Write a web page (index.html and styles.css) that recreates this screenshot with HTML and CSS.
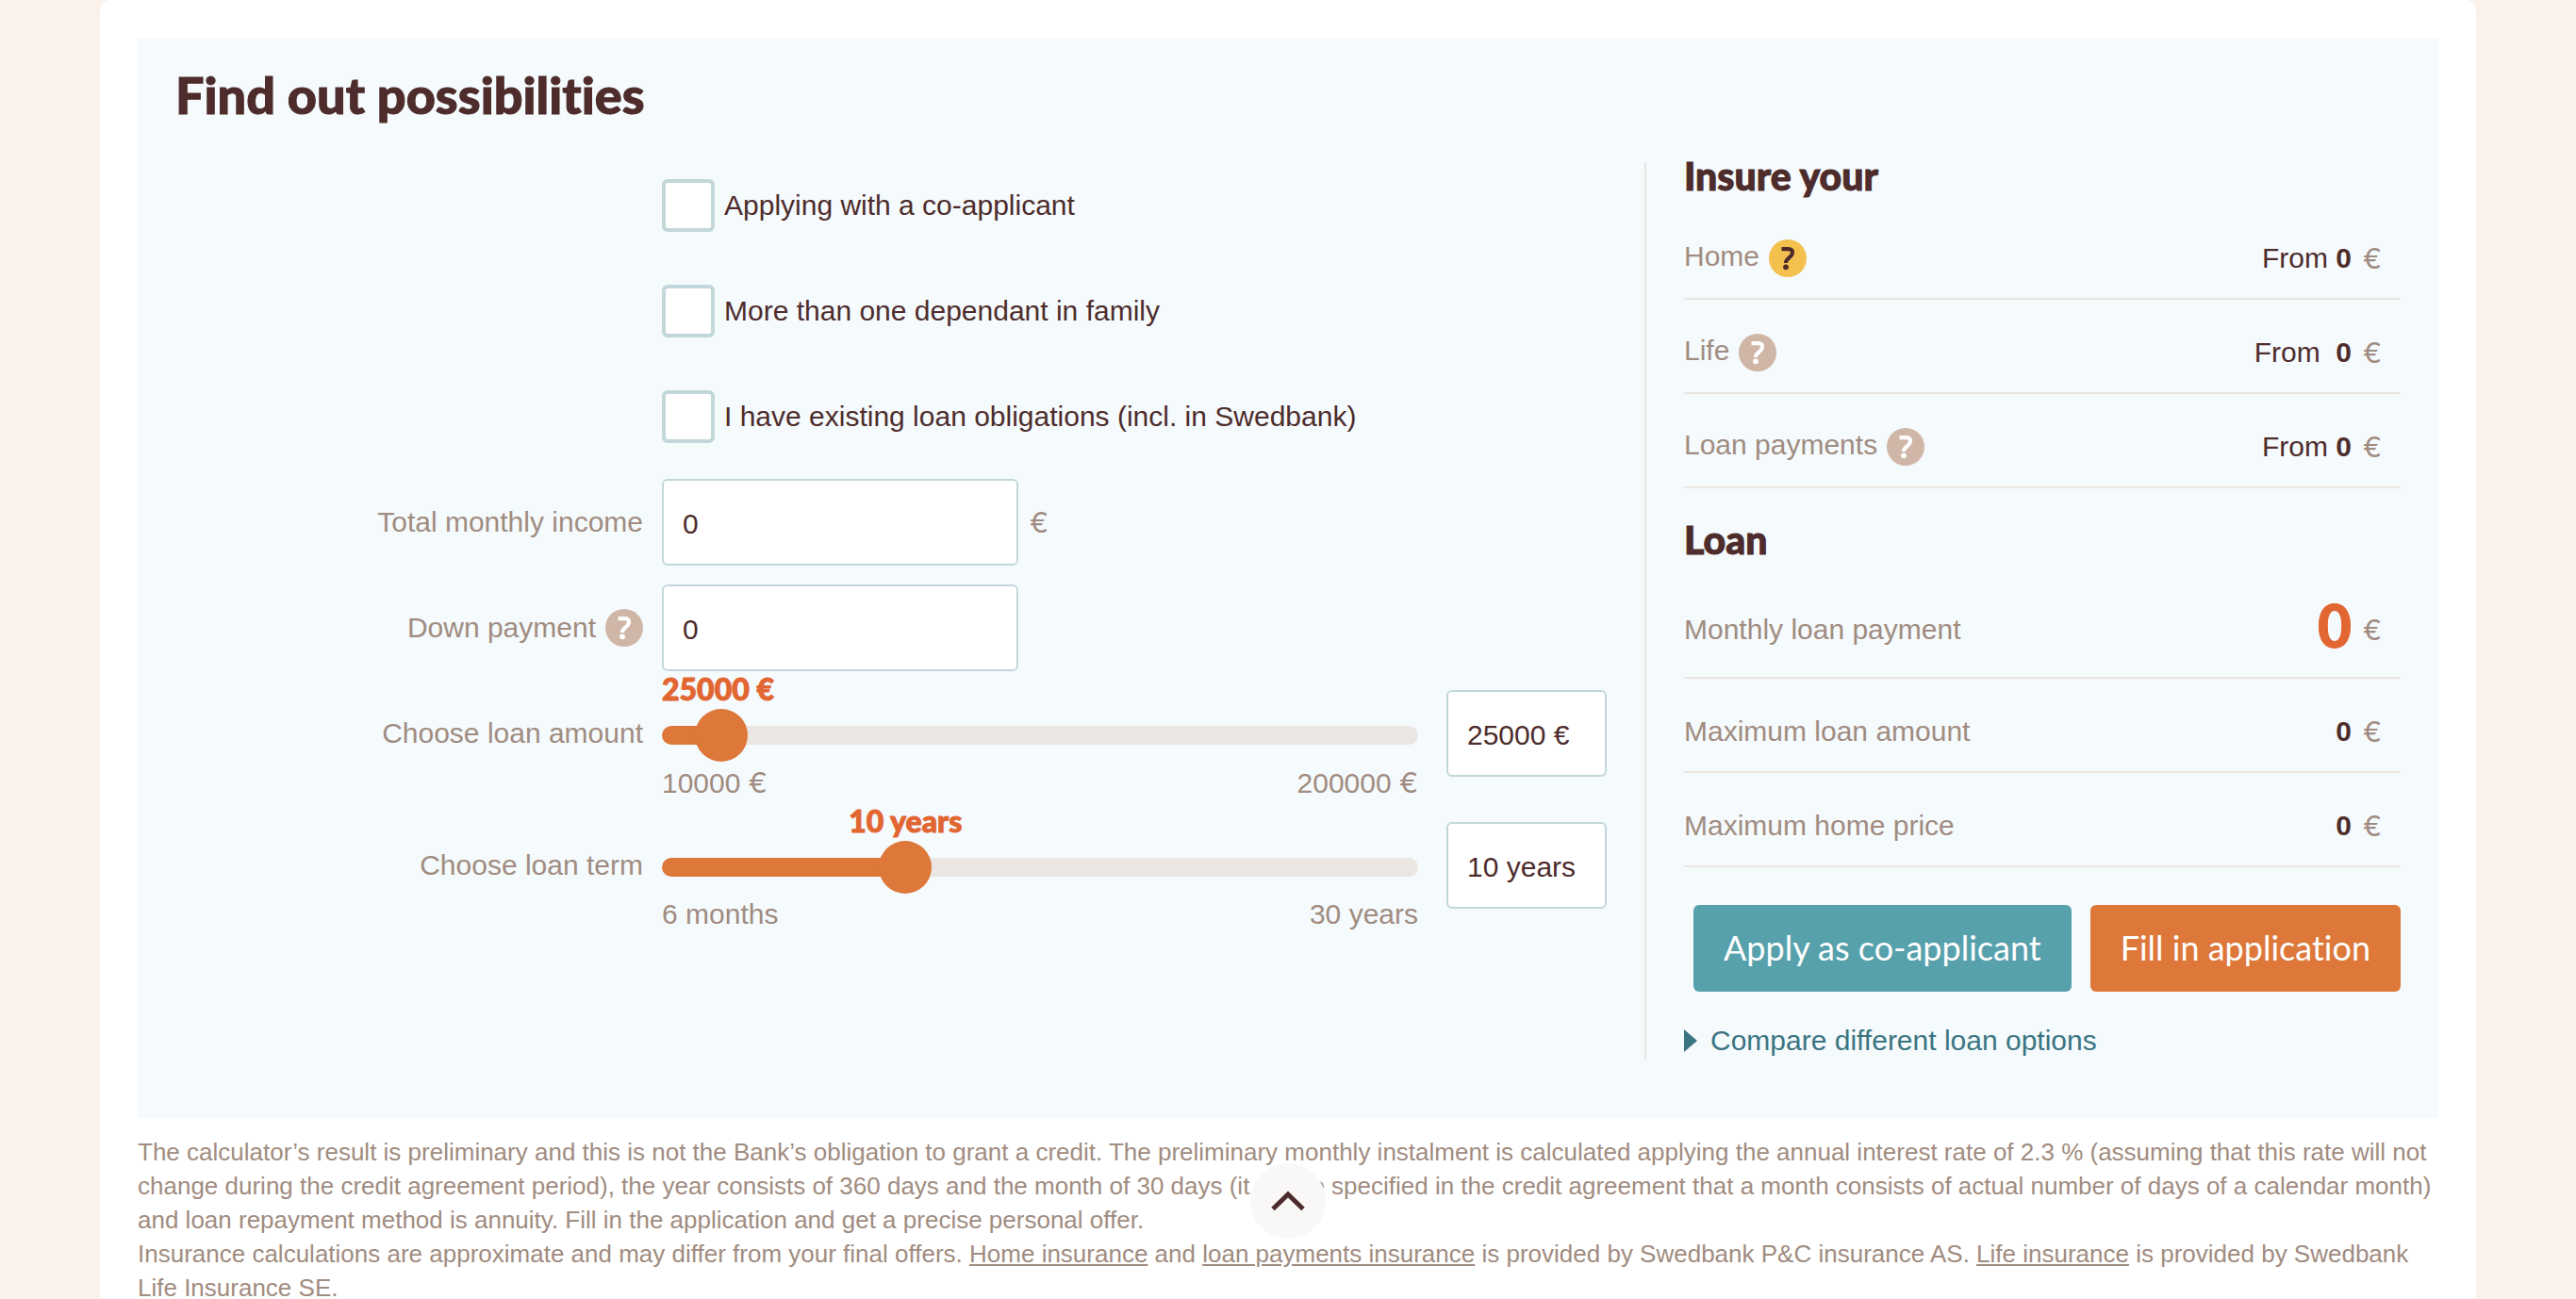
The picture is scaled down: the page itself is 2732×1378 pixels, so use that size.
FILE: index.html
```html
<!DOCTYPE html>
<html lang="en">
<head>
<meta charset="utf-8">
<meta name="viewport" content="width=device-width, initial-scale=1">
<title>Home loan calculator</title>
<link rel="stylesheet" href="styles.css">
</head>
<body>
<svg class="sprite" aria-hidden="true">
  <symbol id="help" viewBox="0 0 40 40">
    <path d="M13.5 10.1h7.2c3.2 0 4.6 1.500 4.200 4.600-.7 4.700-6.900 4.800-7 10.300" fill="none" stroke="currentColor" stroke-width="4.200"/>
    <circle cx="18" cy="29.300" r="2.900" fill="currentColor"/>
  </symbol>
</svg>
<main class="page">
  <section class="panel">
    <h1 class="title">Find out possibilities</h1>
    <div class="columns">
      <form class="form">
        <div class="row row-check">
          <label class="check"><input class="check-box" type="checkbox">Applying with a co-applicant</label>
        </div>
        <div class="row row-check">
          <label class="check"><input class="check-box" type="checkbox">More than one dependant in family</label>
        </div>
        <div class="row row-check">
          <label class="check"><input class="check-box" type="checkbox">I have existing loan obligations (incl. in Swedbank)</label>
        </div>
        <div class="row">
          <label class="row-label" for="income">Total monthly income</label>
          <div class="field"><input class="box box-wide" id="income" type="text" value="0"><span class="unit">€</span></div>
        </div>
        <div class="row">
          <div class="row-label">
            <label for="down">Down payment</label>
            <button class="help" type="button" aria-label="About down payment"><svg class="help-icon"><use href="#help"/></svg></button>
          </div>
          <div class="field"><input class="box box-wide" id="down" type="text" value="0"></div>
        </div>
        <div class="row row-slider">
          <label class="row-label" for="amount">Choose loan amount</label>
          <div class="slider-field">
            <div class="slider" style="--at: 7.9%">
              <output class="bubble bubble-start" for="amount">25000 €</output>
              <div class="track"><input class="range" id="amount" type="range" min="10000" max="200000" step="1000" value="25000"></div>
              <div class="limits"><span>10000 <span class="unit">€</span></span><span>200000 <span class="unit">€</span></span></div>
            </div>
            <input class="box" type="text" value="25000 €" aria-label="Loan amount">
          </div>
        </div>
        <div class="row row-slider">
          <label class="row-label" for="term">Choose loan term</label>
          <div class="slider-field">
            <div class="slider" style="--at: 32.2%">
              <output class="bubble" for="term">10 years</output>
              <div class="track"><input class="range" id="term" type="range" min="6" max="360" value="120"></div>
              <div class="limits"><span>6 months</span><span>30 years</span></div>
            </div>
            <input class="box" type="text" value="10 years" aria-label="Loan term">
          </div>
        </div>
      </form>
      <aside class="summary">
        <h2 class="subtitle">Insure your</h2>
        <dl class="list">
          <div class="item">
            <dt class="item-name item-name-help">Home <button class="help help-active" type="button" aria-label="About home insurance"><svg class="help-icon"><use href="#help"/></svg></button></dt>
            <dd class="item-value">From <b>0</b><span class="unit">€</span></dd>
          </div>
          <div class="item">
            <dt class="item-name item-name-help">Life <button class="help" type="button" aria-label="About life insurance"><svg class="help-icon"><use href="#help"/></svg></button></dt>
            <dd class="item-value">From&nbsp; <b>0</b><span class="unit">€</span></dd>
          </div>
          <div class="item">
            <dt class="item-name item-name-help">Loan payments <button class="help" type="button" aria-label="About loan payments insurance"><svg class="help-icon"><use href="#help"/></svg></button></dt>
            <dd class="item-value">From <b>0</b><span class="unit">€</span></dd>
          </div>
        </dl>
        <h2 class="subtitle subtitle-next">Loan</h2>
        <dl class="list">
          <div class="item item-main">
            <dt class="item-name">Monthly loan payment</dt>
            <dd class="item-value"><b class="big">0</b><span class="unit">€</span></dd>
          </div>
          <div class="item">
            <dt class="item-name">Maximum loan amount</dt>
            <dd class="item-value"><b>0</b><span class="unit">€</span></dd>
          </div>
          <div class="item">
            <dt class="item-name">Maximum home price</dt>
            <dd class="item-value"><b>0</b><span class="unit">€</span></dd>
          </div>
        </dl>
        <div class="actions">
          <button class="button button-teal" type="button">Apply as co-applicant</button>
          <button class="button button-orange" type="button">Fill in application</button>
        </div>
        <a class="compare" href="#compare"><svg class="compare-arrow" viewBox="0 0 14 24"><path d="M0 0l14 12L0 24z" fill="currentColor"/></svg>Compare different loan options</a>
      </aside>
    </div>
  </section>
  <div class="notes">
    <p class="note">The calculator’s result is preliminary and this is not the Bank’s obligation to grant a credit. The preliminary monthly instalment is calculated applying the annual interest rate of 2.3 % (assuming that this rate will not change during the credit agreement period), the year consists of 360 days and the month of 30 days (it will be specified in the credit agreement that a month consists of actual number of days of a calendar month) and loan repayment method is annuity. Fill in the application and get a precise personal offer.</p>
    <p class="note">Insurance calculations are approximate and may differ from your final offers. <a class="note-link" href="#home">Home insurance</a> and <a class="note-link" href="#payments">loan payments insurance</a> is provided by Swedbank P&amp;C insurance AS. <a class="note-link" href="#life">Life insurance</a> is provided by Swedbank Life Insurance SE.</p>
  </div>
</main>
<button class="to-top" type="button" aria-label="Back to top">
  <svg class="to-top-icon" viewBox="0 0 80 80"><path d="M24 48.500L40 33l16 15.500" fill="none" stroke="currentColor" stroke-width="5"/></svg>
</button>
</body>
</html>
```
FILE: styles.css
```css
:root {
  --ink: #4d2c2b;
  --muted: #a08c80;
  --line: #ebe6e1;
  --field-line: #c2d7d9;
  --orange: #dd783a;
  --orange-text: #e26632;
  --sans: "Liberation Sans", Arial, sans-serif;
  --display: Lato, "Noto Sans", sans-serif;
}

* {
  box-sizing: border-box;
}

body {
  margin: 0;
  padding: 0 106px;
  background: #faf1eb;
  color: var(--ink);
  font: 30px/36px var(--sans);
}

button,
input {
  margin: 0;
  font: inherit;
  color: inherit;
}

.sprite {
  display: none;
}

.page {
  padding: 40px 40px 0;
  border-radius: 10px 10px 0 0;
  background: #fff;
}

.panel {
  padding: 40px 40px 60px;
  background: #f5fafd;
}

/* Display headings and figures are set extra heavy. */
.title,
.subtitle,
.bubble,
.big {
  font-family: var(--display);
  font-weight: 900;
  font-variant-ligatures: none;
  -webkit-text-stroke: 1px currentColor;
}

.title {
  margin: 0 0 50px;
  font-size: 54px;
  line-height: 42px;
}

.columns {
  display: grid;
  grid-template-columns: minmax(0, 1fr) 802px;
}

/* Calculator form */

.form {
  display: flex;
  flex-direction: column;
  gap: 20px;
  padding-right: 40px;
}

.row {
  display: grid;
  grid-template-columns: 496px minmax(0, 1fr);
  column-gap: 20px;
}

.row-label {
  display: flex;
  align-items: center;
  justify-content: flex-end;
  gap: 10px;
  height: 92px;
  color: var(--muted);
}

.row-check {
  min-height: 92px;
  align-items: center;
}

.check {
  grid-column: 2;
  display: flex;
  align-items: center;
  gap: 10px;
}

.check-box {
  appearance: none;
  width: 56px;
  height: 56px;
  border: 4px solid var(--field-line);
  border-radius: 6px;
  background: #fff;
}

.check-box:checked {
  background: var(--orange);
}

.field {
  display: flex;
  align-items: center;
  gap: 12px;
}

.unit {
  color: var(--muted);
  font-family: Inter, var(--sans);
}

.box {
  width: 170px;
  height: 92px;
  padding: 4px 20px 0;
  border: 2px solid var(--field-line);
  border-radius: 6px;
  background: #fff;
}

.box-wide {
  width: 378px;
}

.slider-field {
  display: grid;
  grid-template-columns: minmax(0, 1fr) 170px;
  column-gap: 30px;
  align-items: start;
}

.row-slider {
  min-height: 120px;
}

.slider {
  position: relative;
  padding-top: 38px;
}

.bubble {
  position: absolute;
  top: -20px;
  left: var(--at);
  transform: translateX(-50%);
  color: var(--orange-text);
  font-size: 32px;
  line-height: 38px;
  white-space: nowrap;
}

.bubble-start {
  left: 0;
  transform: none;
}

.track {
  display: flex;
  align-items: center;
  height: 20px;
  border-radius: 10px;
  background: linear-gradient(to right, var(--orange) var(--at), var(--line) var(--at));
}

/* Widened by half a thumb on each side, so that the thumb's centre meets the end of the fill. */
.range {
  appearance: none;
  flex: none;
  width: calc(100% + 56px);
  height: 56px;
  margin: 0 -28px;
  background: transparent;
}

.range::-webkit-slider-thumb {
  appearance: none;
  width: 56px;
  height: 56px;
  border: 0;
  border-radius: 50%;
  background: var(--orange);
}

.range::-moz-range-thumb {
  width: 56px;
  height: 56px;
  border: 0;
  border-radius: 50%;
  background: var(--orange);
}

.limits {
  display: flex;
  justify-content: space-between;
  padding-top: 22px;
  color: var(--muted);
}

.help {
  flex: none;
  width: 40px;
  height: 40px;
  padding: 0;
  border: 0;
  border-radius: 50%;
  background: #cfb6a6;
  color: #fff;
}

.help-active {
  background: #f4c14f;
  color: var(--ink);
}

.help-icon {
  display: block;
  width: 40px;
  height: 40px;
}

/* Summary */

.summary {
  padding: 0 0 2px 40px;
  border-left: 2px solid var(--line);
}

.subtitle {
  margin: 0 0 16px;
  font-size: 41px;
  line-height: 30px;
}

.subtitle-next {
  margin-top: 40px;
}

.list {
  margin: 0;
}

.item {
  display: flex;
  justify-content: space-between;
  align-items: flex-start;
  padding: 36px 20px 22px 0;
  border-bottom: 2px solid var(--line);
}

.item-name {
  display: flex;
  gap: 10px;
  color: var(--muted);
  line-height: 40px;
}

.item-name-help {
  line-height: 36px;
}

.item-value {
  display: flex;
  align-items: center;
  margin: 0;
  line-height: 40px;
  white-space: pre;
}

.item-value .unit {
  margin-left: 12px;
}

.item-main .item-name,
.item-main .item-value {
  line-height: 56px;
}

.item-value .big {
  padding-bottom: 10px;
  color: var(--orange-text);
  font-size: 62px;
  line-height: 46px;
}

.actions {
  display: flex;
  justify-content: flex-end;
  gap: 20px;
  margin: 40px 0 32px;
}

.button {
  height: 92px;
  padding: 0 32px 2px;
  border: 0;
  border-radius: 6px;
  color: #fff;
  font: 36px/44px var(--display);
  font-variant-ligatures: none;
  white-space: nowrap;
}

.button-teal {
  background: #57a1ac;
}

.button-orange {
  background: var(--orange);
}

.compare {
  display: flex;
  align-items: center;
  gap: 14px;
  color: #3b7581;
  line-height: 40px;
  text-decoration: none;
}

.compare-arrow {
  width: 14px;
  height: 24px;
}

/* Notes under the panel */

.notes {
  margin-top: 18px;
  color: var(--muted);
  font-size: 26px;
}

.note {
  margin: 0;
}

.note-link {
  color: inherit;
}

.to-top {
  position: fixed;
  bottom: 64px;
  left: calc(50% - 40px);
  width: 80px;
  height: 80px;
  padding: 0;
  border: 0;
  border-radius: 50%;
  background: #f9f8f7;
}

.to-top-icon {
  display: block;
  width: 80px;
  height: 80px;
}
```
